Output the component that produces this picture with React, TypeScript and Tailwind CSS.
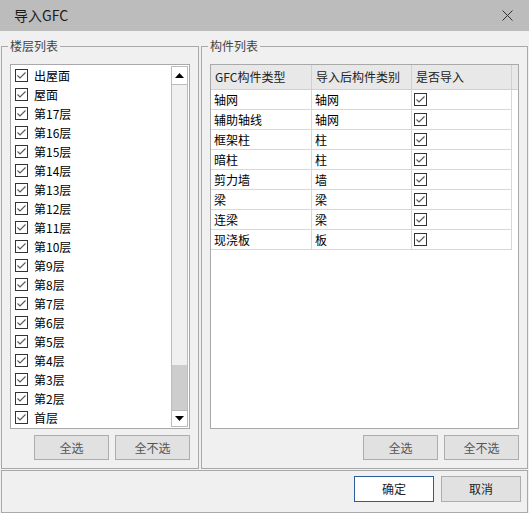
import React from "react";

const floors = [
  "出屋面", "屋面", "第17层", "第16层", "第15层", "第14层", "第13层", "第12层", "第11层",
  "第10层", "第9层", "第8层", "第7层", "第6层", "第5层", "第4层", "第3层", "第2层", "首层",
];

const rows: [string, string][] = [
  ["轴网", "轴网"],
  ["辅助轴线", "轴网"],
  ["框架柱", "柱"],
  ["暗柱", "柱"],
  ["剪力墙", "墙"],
  ["梁", "梁"],
  ["连梁", "梁"],
  ["现浇板", "板"],
];

function Check() {
  return (
    <span className="w-[13px] h-[13px] border border-[#333333] bg-white flex items-center justify-center shrink-0">
      <svg width="11" height="11" viewBox="0 0 11 11">
        <path d="M1.5 5.5 L4 8 L9.5 2.5" stroke="#555555" strokeWidth="1.1" fill="none" />
      </svg>
    </span>
  );
}

function Btn({ children, primary }: { children: React.ReactNode; primary?: boolean }) {
  return (
    <div
      className={
        primary
          ? "w-[80px] h-[26px] border border-[#2d5a9a] bg-white flex items-center justify-center text-[12px] text-[#222]"
          : "w-[80px] h-[26px] border border-[#adadad] bg-[#e1e1e1] flex items-center justify-center text-[12px] text-[#222]"
      }
    >
      {children}
    </div>
  );
}

function SmallBtn({ children }: { children: React.ReactNode }) {
  return (
    <div className="w-[75px] h-[25px] border border-[#adadad] bg-[#e1e1e1] flex items-center justify-center text-[12px] text-[#555]">
      {children}
    </div>
  );
}

function Group({ title, children, w }: { title: string; children: React.ReactNode; w: string }) {
  return (
    <div className={`relative h-[423px] border border-[#a9a9a9] px-[8px] pt-[17px] ${w}`}>
      <span className="absolute left-[6px] -top-[9px] px-[2px] bg-[#f0f0f0] text-[12px] leading-[16px] text-[#444]">
        {title}
      </span>
      {children}
    </div>
  );
}

export default function App() {
  return (
    <div
      className="w-[529px] h-[513px] bg-[#f0f0f0] flex flex-col overflow-hidden"
      style={{ fontFamily: "'Noto Sans CJK SC', 'Microsoft YaHei', sans-serif" }}
    >
      <div className="h-[31px] bg-[#bcbcbc] flex items-center justify-between pl-[14px] pr-[16px]">
        <span className="text-[14px] text-[#1a1a1a]">导入GFC</span>
        <svg width="11" height="11" viewBox="0 0 11 11">
          <path d="M0.5 0.5 L10.5 10.5 M10.5 0.5 L0.5 10.5" stroke="#333" strokeWidth="1" />
        </svg>
      </div>

      <div className="flex pl-[1px] pt-[15px] gap-[2px]">
        <Group title="楼层列表" w="w-[198px]">
          <div className="h-[365px] w-[180px] border border-[#a9a9a9] bg-white flex">
            <div className="flex-1 pt-[1px]">
              {floors.map((f) => (
                <div key={f} className="h-[19px] flex items-center pl-[4px] gap-[6px] text-[12px] text-black">
                  <Check />
                  <span>{f}</span>
                </div>
              ))}
            </div>
            <div className="w-[17px] my-[1px] mr-[1px] flex flex-col">
              <div className="h-[19px] border border-[#bcbcbc] bg-white flex items-center justify-center">
                <svg width="9" height="5" viewBox="0 0 9 5"><path d="M0 5 L4.5 0 L9 5 Z" fill="#000" /></svg>
              </div>
              <div className="flex-1 bg-[#f0f0f0] border-x border-[#bcbcbc]" />
              <div className="h-[45px] bg-[#cdcdcd] border-x border-[#bcbcbc]" />
              <div className="h-[17px] border border-[#bcbcbc] bg-white flex items-center justify-center">
                <svg width="9" height="5" viewBox="0 0 9 5"><path d="M0 0 L4.5 5 L9 0 Z" fill="#000" /></svg>
              </div>
            </div>
          </div>
          <div className="flex justify-end gap-[6px] mt-[6px] w-[180px]">
            <SmallBtn>全选</SmallBtn>
            <SmallBtn>全不选</SmallBtn>
          </div>
        </Group>

        <Group title="构件列表" w="w-[327px]">
          <div className="h-[365px] w-[309px] border border-[#a9a9a9] bg-white">
            <div className="flex h-[25px] bg-[#e8e8e8] border-b border-[#d0d0d0] text-[12px] text-[#222]">
              <div className="w-[101px] border-r border-[#d0d0d0] pl-[4px] flex items-center">GFC构件类型</div>
              <div className="w-[100px] border-r border-[#d0d0d0] pl-[4px] flex items-center">导入后构件类别</div>
              <div className="w-[100px] border-r border-[#d0d0d0] pl-[4px] flex items-center">是否导入</div>
              <div className="flex-1" />
            </div>
            {rows.map(([a, b]) => (
              <div key={a} className="flex h-[20px] w-[301px] border-b border-[#d8d8d8] text-[12px] text-black">
                <div className="w-[101px] border-r border-[#d8d8d8] pl-[3px] flex items-center">{a}</div>
                <div className="w-[100px] border-r border-[#d8d8d8] pl-[3px] flex items-center">{b}</div>
                <div className="w-[100px] border-r border-[#d8d8d8] pl-[2px] flex items-center">
                  <Check />
                </div>
              </div>
            ))}
          </div>
          <div className="flex justify-end gap-[6px] mt-[6px] w-[309px]">
            <SmallBtn>全选</SmallBtn>
            <SmallBtn>全不选</SmallBtn>
          </div>
        </Group>
      </div>

      <div className="mt-[1px] ml-[1px] w-[527px] h-[43px] border border-[#a9a9a9] flex justify-end gap-[7px] pt-[5px] pr-[6px]">
        <Btn primary>确定</Btn>
        <Btn>取消</Btn>
      </div>
    </div>
  );
}
